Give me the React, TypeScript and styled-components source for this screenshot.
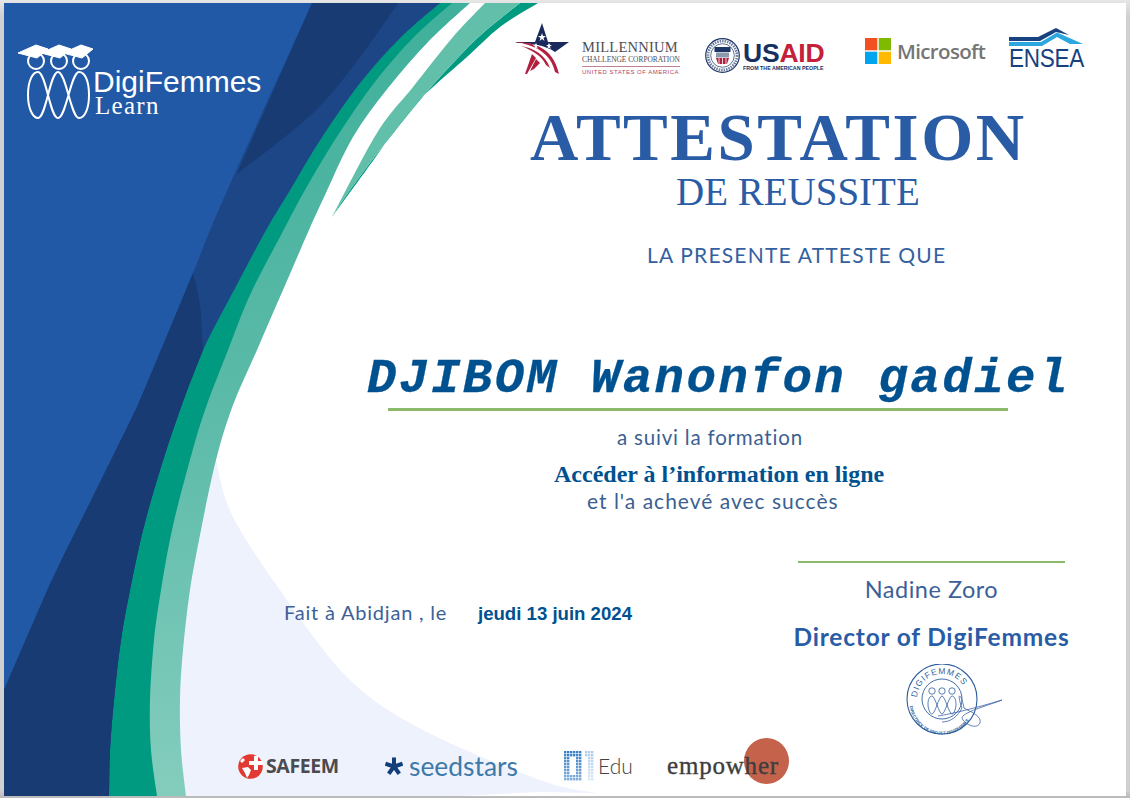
import React from 'react'
import styled, { createGlobalStyle } from 'styled-components'

const GlobalStyle = createGlobalStyle`
  html, body { margin: 0; padding: 0; background: #d2d2d2; overflow: hidden; }
  #root { width: 1130px; height: 798px; }
`

const Page = styled.div`
  width: 1130px;
  height: 798px;
  padding: 3px 4px 2px 4px;
  box-sizing: border-box;
  background: linear-gradient(#e6e6e6, #d0d0d0 2%, #d0d0d0 99%, #b8b8b8);
`

const Sheet = styled.main`
  position: relative;
  width: 1122px;
  height: 793px;
  background: #fff;
  overflow: hidden;
`

const Backdrop = styled.svg`
  position: absolute;
  inset: 0;
`

const Content = styled.div`
  position: relative;
  display: flex;
  flex-direction: column;
  height: 100%;
`

const Header = styled.header`
  display: flex;
  align-items: flex-start;
  height: 100px;
`

const Brand = styled.div`
  display: flex;
  width: 511px;
  padding: 39px 0 0 13px;
  box-sizing: border-box;
`

const BrandText = styled.div`
  display: flex;
  flex-direction: column;
  margin: 25px 0 0 -2px;
  color: #fff;
`

const BrandName = styled.span`
  font: 30px/30px 'Liberation Sans', Arial, sans-serif;
`

const BrandSub = styled.span`
  font: 25px/18px 'Liberation Serif', serif;
  margin-left: 2px;
  letter-spacing: 1.3px;
`

const Mcc = styled.div`
  display: flex;
  gap: 13px;
  width: 190px;
  margin-top: 20px;
`

const MccText = styled.div`
  display: flex;
  flex-direction: column;
  width: 98px;
  margin-top: 17px;
  font-family: 'Liberation Serif', serif;
  color: #4d4d55;
  white-space: nowrap;
`

const MccTitle = styled.span`
  font-size: 14.5px;
  line-height: 14px;
  letter-spacing: 0.25px;
`

const MccSub = styled.span`
  font-size: 7.4px;
  line-height: 11px;
  border-bottom: 1px solid #c0808f;
  padding-bottom: 1px;
`

const MccCountry = styled.span`
  font: 6px/10px 'Liberation Sans', sans-serif;
  letter-spacing: 0.5px;
  color: #b0475e;
`

const Usaid = styled.div`
  display: flex;
  gap: 3px;
  width: 160px;
  margin-top: 35px;
`

const UsaidText = styled.div`
  display: flex;
  flex-direction: column;
  margin-top: 3px;
  font-family: 'Liberation Sans', sans-serif;
  font-weight: 700;
  color: #16305f;
`

const UsaidMark = styled.span`
  font-size: 26.5px;
  line-height: 24px;
  letter-spacing: -0.2px;
  b { color: #c5203a; font-weight: 700; }
`

const UsaidTag = styled.span`
  font-size: 5.3px;
  line-height: 7px;
  white-space: nowrap;
`

const MicrosoftLogo = styled.div`
  display: flex;
  align-items: center;
  gap: 6px;
  width: 144px;
  margin-top: 35px;
  font: 600 20.5px/26px 'Open Sans', sans-serif;
  letter-spacing: -0.65px;
  color: #757575;
`

const Ensea = styled.div`
  display: flex;
  flex-direction: column;
  margin-top: 25px;
  color: #17417f;
`

const EnseaWord = styled.span`
  font: 25px/22px 'Liberation Sans', sans-serif;
  letter-spacing: -0.3px;
  transform: scaleX(0.9);
  transform-origin: left center;
  white-space: nowrap;
`

const Title = styled.h1`
  margin: -1px 0 0 526px;
  font: 700 67px/70px 'Liberation Serif', serif;
  letter-spacing: 2.5px;
  color: #2a5ca6;
  white-space: nowrap;
`

const Subtitle = styled.h2`
  margin: -2px 0 0 672px;
  font: 400 39px/44px 'Liberation Serif', serif;
  color: #2a5ca6;
  white-space: nowrap;
`

const Lead = styled.p`
  margin: 27px 0 0 643px;
  font: 400 21px/28px Lato, sans-serif;
  letter-spacing: 1.2px;
  color: #34609f;
  white-space: nowrap;
`

const Recipient = styled.div`
  margin: 85px 0 0 363px;
  font: italic 700 49px/50px 'Liberation Mono', monospace;
  letter-spacing: 2.55px;
  -webkit-text-stroke: 0.3px #00518f;
  color: #00518f;
  white-space: nowrap;
`

const GreenRule = styled.div<{ $width: number; $left?: number; $top?: number }>`
  width: ${(p) => p.$width}px;
  height: 2.5px;
  margin: ${(p) => p.$top ?? 0}px 0 0 ${(p) => p.$left ?? 0}px;
  background: #8cba6c;
`

const Followed = styled.p`
  margin: 13px 0 0 613px;
  font: 400 20.5px/26px Lato, sans-serif;
  letter-spacing: 0.8px;
  color: #3c5f92;
`

const Course = styled.h3`
  margin: 11px 0 0 550px;
  font: 700 24px/26px 'Liberation Serif', serif;
  color: #00518f;
  white-space: nowrap;
`

const Achieved = styled.p`
  margin: 1px 0 0 583px;
  font: 400 21px/26px Lato, sans-serif;
  letter-spacing: 1px;
  color: #3c5f92;
`

const Footer = styled.div`
  display: flex;
  margin-top: 47px;
`

const Place = styled.div`
  display: flex;
  align-items: baseline;
  width: 794px;
  height: 120px;
  padding: 38px 0 0 280px;
  box-sizing: border-box;
`

const PlaceLabel = styled.span`
  width: 194px;
  font: 400 20px/26px Lato, sans-serif;
  letter-spacing: 0.8px;
  color: #3c6199;
  white-space: nowrap;
`

const DateText = styled.span`
  font: 700 18.6px/26px 'Liberation Sans', sans-serif;
  color: #00518f;
  white-space: nowrap;
`

const Signatory = styled.div`
  display: flex;
  flex-direction: column;
  align-items: center;
  width: 267px;
`

const SignName = styled.div`
  margin-top: 12px;
  font: 400 23.5px/28px Lato, sans-serif;
  letter-spacing: 0.5px;
  color: #3c6199;
`

const SignRole = styled.div`
  margin-top: 20px;
  font: 700 24.5px/28px Lato, sans-serif;
  letter-spacing: 0.8px;
  color: #2a5ca6;
  white-space: nowrap;
`

const Stamp = styled.svg`
  align-self: flex-start;
  margin: 13px 0 0 108px;
`

const Sponsors = styled.footer`
  display: flex;
  align-items: center;
  height: 60px;
  margin-top: auto;
  padding-left: 234px;
`

const Safeem = styled.div`
  display: flex;
  align-items: center;
  gap: 3px;
  width: 147px;
  font: 700 19.5px/26px 'Open Sans', sans-serif;
  letter-spacing: -0.4px;
  color: #4b4b4f;
`

const Seedstars = styled.div`
  display: flex;
  align-items: center;
  gap: 6px;
  width: 179px;
  font: 400 26.4px/28px Lato, sans-serif;
  color: #3d7aa9;
`

const EduLogo = styled.div`
  display: flex;
  align-items: center;
  gap: 2px;
  width: 103px;
  font: 300 21px/26px Lato, sans-serif;
  color: #444;
`

const Empowher = styled.div`
  position: relative;
  font: 400 25px/30px 'Liberation Serif', serif;
  letter-spacing: 0.8px;
  -webkit-text-stroke: 0.35px #3d3d3d;
  color: #3d3d3d;
  span { position: relative; }
`

const EmpowherDot = styled.i`
  position: absolute;
  left: 77px;
  top: -13px;
  width: 45px;
  height: 46px;
  border-radius: 50%;
  background: #c4624b;
`

type Pt = [number, number]

// catmull-rom through the points traced from the artwork, as cubic segments
const smooth = (pts: Pt[]) => {
  let d = ''
  for (let i = 0; i < pts.length - 1; i++) {
    const p0 = pts[i - 1] ?? pts[i]
    const p1 = pts[i]
    const p2 = pts[i + 1]
    const p3 = pts[i + 2] ?? p2
    const c1x = p1[0] + (p2[0] - p0[0]) / 6
    const c1y = p1[1] + (p2[1] - p0[1]) / 6
    const c2x = p2[0] - (p3[0] - p1[0]) / 6
    const c2y = p2[1] - (p3[1] - p1[1]) / 6
    d += ` C${c1x.toFixed(1)} ${c1y.toFixed(1)} ${c2x.toFixed(1)} ${c2y.toFixed(1)} ${p2[0]} ${p2[1]}`
  }
  return d
}

const leftOf = (pts: Pt[]) => `M0 0 L${pts[0][0]} 0 L${pts[0][0]} ${pts[0][1]}${smooth(pts)} L0 796 Z`

const tealEdge: Pt[] = [[470, 3], [428, 42], [388, 88], [353, 137], [325, 195], [309, 230], [283, 290], [257, 350], [233, 405], [216, 460], [201, 530], [190, 590], [183, 650], [180, 700], [181, 750], [186, 796]]
const greenEdge: Pt[] = [[452, 3], [413, 38], [374, 83], [338, 135], [305, 190], [281, 235], [250, 295], [228, 350], [205, 410], [188, 467], [172, 530], [161, 590], [154, 640], [150, 700], [151, 750], [157, 796]]
const navyEdge: Pt[] = [[440, 3], [400, 38], [360, 83], [322, 137], [290, 190], [266, 230], [235, 288], [203, 350], [180, 410], [160, 470], [143, 530], [130, 590], [121, 640], [114, 700], [110, 750], [109, 796]]
const shadeLine: Pt[] = [[312, 3], [223, 200], [193, 273], [137, 407], [60, 563], [43, 600], [4, 690]]

const swooshTop: Pt[] = [[485, 3], [453, 37], [413, 87], [377, 133], [332, 217]]
const swooshMid: Pt[] = [[520, 3], [483, 33], [453, 63], [420, 100], [380, 150], [350, 190], [332, 217]]
const swooshLow: Pt[] = [[538, 3], [500, 27], [467, 57], [433, 87], [407, 113], [375, 158], [332, 217]]

const CertificateBackground = () => (
  <Backdrop width="1122" height="793" viewBox="4 3 1122 793">
    <defs>
      <linearGradient id="tealBand" x1="0" y1="0" x2="0" y2="1">
        <stop offset="0" stopColor="#3fb09b" />
        <stop offset="0.5" stopColor="#5bbaa8" />
        <stop offset="1" stopColor="#84cdbd" />
      </linearGradient>
    </defs>
    <path fill="#eef2fd" d={`M216 460${smooth([[216, 460], [233, 517], [287, 600], [350, 680], [423, 730], [540, 780], [596, 793]])} L540 792 L460 796 L100 796 L100 460 Z`} />
    <path fill="url(#tealBand)" d={leftOf(tealEdge)} />
    <path fill="#009a80" d={leftOf(greenEdge)} />
    <path fill="#2259a7" d={leftOf(navyEdge)} />
    <path fill="#1c4685" d={`M312 3 L440 3${smooth(navyEdge)} L4 796 L4 690${smooth([...shadeLine].reverse())} Z`} />
    <path fill="#173b72" d={`M312 3 L398 3${smooth([[398, 3], [360, 57], [313, 113], [237, 174]])} Z`} />
    <path fill="#173b72" d={`M193 273${smooth([[193, 273], [200, 305], [203, 350]])}${smooth(navyEdge.slice(7))} L103 796 L109 782 L102 796 L4 796 L4 690 L43 600 L60 563 L137 407 Z`} />
    <path fill="#009a80" d={`M538 3${smooth(swooshLow)}${smooth([...swooshMid].reverse())} Z`} />
    <path fill="#62bfaa" d={`M485 3 L520 3${smooth(swooshMid)}${smooth([...swooshTop].reverse())} Z`} />
  </Backdrop>
)

const BrandMark = () => (
  <svg width="78" height="78" viewBox="17 41 78 78" fill="none" stroke="#fff">
    {[36, 59, 81].map((x) => (
      <g key={x}>
        <circle cx={x} cy="60" r="8" strokeWidth="2" />
        <path d={`M${x - 18} 52 L${x} 44 L${x + 12} 48 L${x + 1} 57 Z`} fill="#fff" stroke="#fff" strokeWidth="1" />
      </g>
    ))}
    <path
      strokeWidth="2"
      d="M28 94 C28 79 33 71 38 71 C46 71 50 117 58 117 C66 117 71 71 79 71 C85 71 89 80 89 94 C89 107 85 117 79 117 C71 117 66 71 58 71 C50 71 46 117 38 117 C33 117 28 108 28 94 Z"
    />
  </svg>
)

const MccStar = () => (
  <svg width="54" height="52" viewBox="0 0 54 52">
    <path fill="#1b2a5c" d="M27 0 L33 19 H54 L40 29 C30 22 15 20 3 20 L0 19 H20 Z" />
    <path fill="#b3203f" d="M0 19 C18 19 38 24 44 51 L40 49 C36 30 20 22 0 19 Z" />
    <path fill="#b3203f" d="M6 23 C18 25 30 31 35 45 L31 42 C27 33 17 27 6 23 Z" />
    <path fill="#b3203f" d="M17 31 L21 35 L12 51 L10 51 Z" />
    <path fill="#b3203f" d="M21 36 L25 40 L19 46 L15 48 Z" />
    <path fill="#fff" d="M27 10 l1 3 h3 l-2.500 2 l1 3 l-2.500 -2 l-2.500 2 l1 -3 l-2.500 -2 h3 Z" />
    <path fill="#fff" d="M21 20 l1 2 h2 l-2 1.500 l.7 2.500 l-1.700 -1.500 l-1.700 1.500 l.7 -2.500 l-2 -1.500 h2 Z" />
    <path fill="#fff" d="M34 20 l1 2 h2 l-2 1.500 l.7 2.500 l-1.700 -1.500 l-1.700 1.500 l.7 -2.500 l-2 -1.500 h2 Z" />
  </svg>
)

const UsaidSeal = () => (
  <svg width="35" height="35" viewBox="0 0 35 35">
    <circle cx="17.500" cy="17.500" r="16.800" fill="#fff" stroke="#1b3566" strokeWidth="1.200" />
    <circle cx="17.500" cy="17.500" r="14.500" fill="none" stroke="#6d7f9f" strokeWidth="2.800" strokeDasharray="1.500 1" />
    <circle cx="17.500" cy="17.500" r="11.800" fill="#fff" stroke="#1b3566" strokeWidth="0.700" />
    <rect x="9.500" y="9" width="16" height="5" fill="#1b3566" />
    <rect x="11" y="14.500" width="13" height="5" fill="#8c99ad" />
    <path fill="#b3203f" d="M11 20 H24 L22 26 H13 Z" />
    <path stroke="#fff" strokeWidth="0.800" d="M14 20 V26 M17.500 20 V27 M21 20 V26" />
  </svg>
)

const MicrosoftMark = () => (
  <svg width="26" height="26" viewBox="0 0 26 26">
    <rect width="12.300" height="12.300" fill="#f25022" />
    <rect x="13.700" width="12.300" height="12.300" fill="#7fba00" />
    <rect y="13.700" width="12.300" height="12.300" fill="#00a4ef" />
    <rect x="13.700" y="13.700" width="12.300" height="12.300" fill="#ffb900" />
  </svg>
)

const EnseaRoof = () => (
  <svg width="75" height="19" viewBox="0 0 75 19">
    <path fill="#17417f" d="M0 9 H29 L47 0 L60 7 L47 4 L31 13 H0 Z" />
    <path fill="#2ba6de" d="M0 14 H32 L48 4.500 L74 16 H61 L48 9 L33 18 H0 Z" />
  </svg>
)

const SignatureStamp = () => (
  <Stamp width="100" height="72" viewBox="0 0 100 72" fill="none">
    <defs>
      <path id="stampTop" d="M11 35 A25 25 0 0 1 61 35" />
      <path id="stampOuter" d="M3.500 38 A32.500 32.500 0 0 0 68.500 38" />
    </defs>
    <circle cx="36" cy="35" r="35" stroke="#2d5f9e" strokeWidth="1.100" />
    <circle cx="36" cy="35" r="20" stroke="#2d5f9e" strokeWidth="0.900" />
    <text fill="#2d5f9e" fontFamily="'Liberation Sans', sans-serif" fontSize="8.500" letterSpacing="0.900">
      <textPath href="#stampTop" startOffset="2%">DIGIFEMMES</textPath>
    </text>
    <text fill="#2d5f9e" fontFamily="'Liberation Sans', sans-serif" fontSize="4.200" fontWeight="700">
      <textPath href="#stampOuter" startOffset="4%">DIRECTRICE DE PROJET DIGIFEMMES</textPath>
    </text>
    {[26, 36, 46].map((x) => (
      <circle key={x} cx={x} cy="27" r="3.200" stroke="#2d5f9e" strokeWidth="0.800" />
    ))}
    <path
      stroke="#2d5f9e"
      strokeWidth="0.800"
      d="M22 40 C22 35 24 32 26 32 C29 32 33 50 36 50 C39 50 43 32 46 32 C48 32 50 35 50 40 C50 45 48 50 46 50 C43 50 39 32 36 32 C33 32 29 50 26 50 C24 50 22 45 22 40 Z"
    />
    <path
      stroke="#3b62a8"
      strokeWidth="0.800"
      d="M32 52 C45 50 70 44 96 36 C80 42 62 47 57 52 C52 56 70 68 74 59 C76 52 65 48 58 44 C55 28 50 28 56 44 C52 52 45 58 36 58"
    />
  </Stamp>
)

const Globe = () => (
  <svg width="25" height="26" viewBox="0 0 25 26">
    <circle cx="12.500" cy="13.500" r="12.300" fill="#e23a33" />
    <path fill="#fff" d="M11 8 H16 V3 H20 V8 H25 V12 H20 V17 H16 V12 H11 Z" />
    <path fill="#fff" d="M4 15 L10 14 L13 17 L11 22 L9 25 L7 20 Z M2 8 L5 5 L7 7 L4 10 Z" />
  </svg>
)

const SeedStar = () => (
  <svg width="18" height="18" viewBox="0 0 18 18" stroke="#123f77" strokeWidth="4">
    <path d="M9 9.500 V0.500 M9 9.500 L17.600 6.700 M9 9.500 L14.300 16.800 M9 9.500 L3.700 16.800 M9 9.500 L0.400 6.700" />
  </svg>
)

// dots of the "01" mark, fading out towards the right
const eduCols = [0, 1, 2, 3, 4, 5, 7, 8, 9]
const eduRows = Array.from({ length: 10 }, (_, i) => i)
const isEduHole = (c: number, r: number) =>
  (c >= 2 && c <= 3 && r >= 2 && r <= 7) || (c === 7 && r > 1)

const EduMark = () => (
  <svg width="32" height="31" viewBox="0 0 32 31">
    {eduCols.map((c) =>
      eduRows.map((r) =>
        isEduHole(c, r) ? null : (
          <rect
            key={`${c}-${r}`}
            x={c * 3}
            y={r * 3}
            width="2.400"
            height="2.400"
            fill={c < 6 ? '#3a7fc8' : '#a9c9ea'}
            opacity={c < 6 ? 1 - r * 0.04 : 0.9 - r * 0.05}
          />
        ),
      ),
    )}
  </svg>
)

const App = () => (
  <Page>
    <GlobalStyle />
    <Sheet>
      <CertificateBackground />
      <Content>
        <Header>
          <Brand>
            <BrandMark />
            <BrandText>
              <BrandName>DigiFemmes</BrandName>
              <BrandSub>Learn</BrandSub>
            </BrandText>
          </Brand>
          <Mcc>
            <MccStar />
            <MccText>
              <MccTitle>MILLENNIUM</MccTitle>
              <MccSub>CHALLENGE CORPORATION</MccSub>
              <MccCountry>UNITED STATES OF AMERICA</MccCountry>
            </MccText>
          </Mcc>
          <Usaid>
            <UsaidSeal />
            <UsaidText>
              <UsaidMark>US<b>AID</b></UsaidMark>
              <UsaidTag>FROM THE AMERICAN PEOPLE</UsaidTag>
            </UsaidText>
          </Usaid>
          <MicrosoftLogo>
            <MicrosoftMark />
            Microsoft
          </MicrosoftLogo>
          <Ensea>
            <EnseaRoof />
            <EnseaWord>ENSEA</EnseaWord>
          </Ensea>
        </Header>
        <Title>ATTESTATION</Title>
        <Subtitle>DE REUSSITE</Subtitle>
        <Lead>LA PRESENTE ATTESTE QUE</Lead>
        <Recipient>DJIBOM Wanonfon gadiel</Recipient>
        <GreenRule $width={620} $left={384} $top={4} />
        <Followed>a suivi la formation</Followed>
        <Course>Accéder à l’information en ligne</Course>
        <Achieved>et l'a achevé avec succès</Achieved>
        <Footer>
          <Place>
            <PlaceLabel>Fait à Abidjan , le</PlaceLabel>
            <DateText>jeudi 13 juin 2024</DateText>
          </Place>
          <Signatory>
            <GreenRule $width={267} />
            <SignName>Nadine Zoro</SignName>
            <SignRole>Director of DigiFemmes</SignRole>
            <SignatureStamp />
          </Signatory>
        </Footer>
        <Sponsors>
          <Safeem>
            <Globe />
            SAFEEM
          </Safeem>
          <Seedstars>
            <SeedStar />
            seedstars
          </Seedstars>
          <EduLogo>
            <EduMark />
            Edu
          </EduLogo>
          <Empowher>
            <EmpowherDot />
            <span>empowher</span>
          </Empowher>
        </Sponsors>
      </Content>
    </Sheet>
  </Page>
)

export default App
